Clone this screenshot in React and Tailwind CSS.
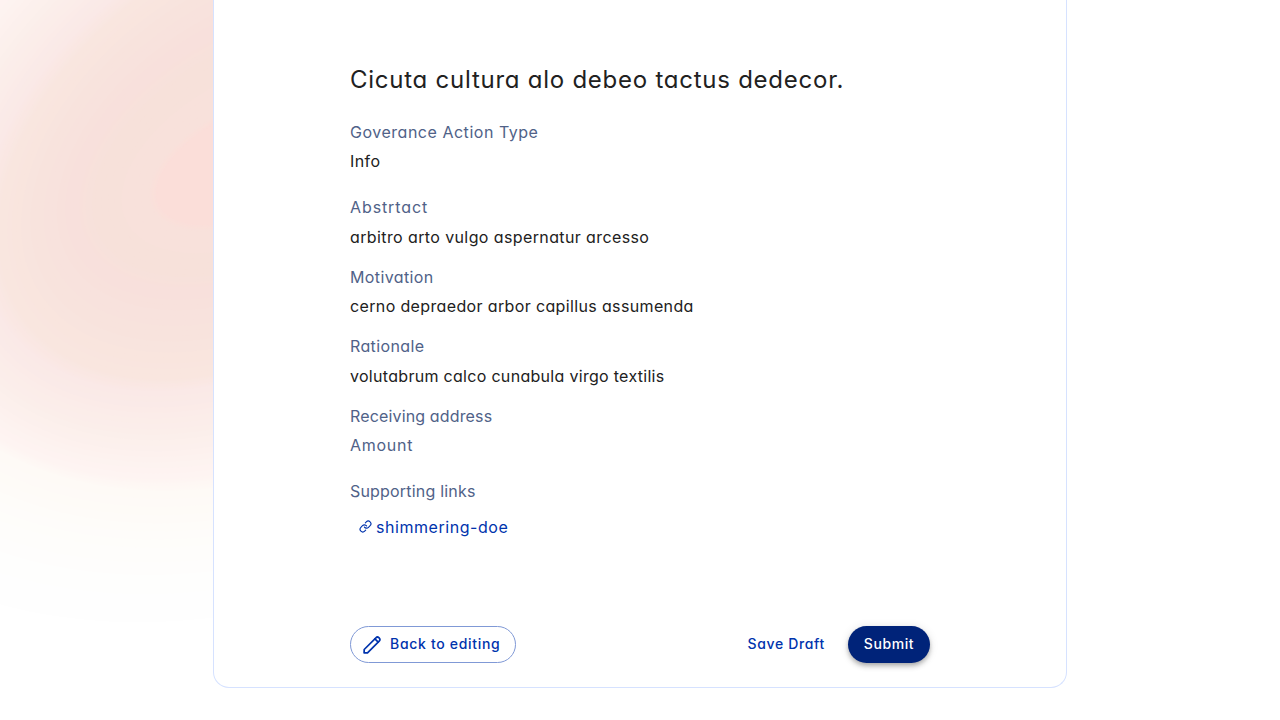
import { Link } from "lucide-react";

// Each stop is a sheared ellipse: centre height, half width, half height, shear and colour.
const GLOW_STOPS = [
  { cy: 145, a: 570, h: 490, m: -0.2, c: [255, 255, 255] },
  { cy: 145, a: 520, h: 450, m: -0.2, c: [254, 254, 254] },
  { cy: 145, a: 470, h: 400, m: -0.2, c: [254, 253, 251] },
  { cy: 150, a: 385, h: 330, m: -0.22, c: [254, 249, 245] },
  { cy: 150, a: 368, h: 316, m: -0.25, c: [254, 244, 242] },
  { cy: 148, a: 320, h: 270, m: -0.3, c: [251, 238, 234] },
  { cy: 145, a: 280, h: 228, m: -0.33, c: [250, 232, 230] },
  { cy: 148, a: 262, h: 215, m: -0.33, c: [249, 230, 223] },
  { cy: 146, a: 225, h: 175, m: -0.33, c: [248, 227, 221] },
  { cy: 145, a: 190, h: 136, m: -0.33, c: [248, 224, 220] },
  { cy: 150, a: 165, h: 112, m: -0.33, c: [247, 225, 218] },
  { cy: 158, a: 112, h: 64, m: -0.33, c: [248, 225, 219] },
  { cy: 159, a: 103, h: 56, m: -0.33, c: [251, 222, 217] },
];

const STEPS = 8;
const mix = (x, y, t) => x + (y - x) * t;

const rings = GLOW_STOPS.slice(0, -1)
  .flatMap((from, i) => {
    const to = GLOW_STOPS[i + 1];
    return Array.from({ length: STEPS }, (_, k) => {
      const t = k / STEPS;
      return {
        cy: mix(from.cy, to.cy, t),
        a: mix(from.a, to.a, t),
        h: mix(from.h, to.h, t),
        m: mix(from.m, to.m, t),
        c: from.c.map((v, j) => Math.round(mix(v, to.c[j], t))),
      };
    });
  })
  .concat(GLOW_STOPS[GLOW_STOPS.length - 1]);

function Glow() {
  return (
    <svg aria-hidden="true" width="860" height="720" viewBox="0 0 860 720" className="pointer-events-none absolute top-0 left-0">
      {rings.map(({ cy, a, h, m, c }, i) => (
        <circle key={i} r="1" fill={`rgb(${c.join(",")})`} transform={`matrix(${a} ${m * a} 0 ${h} 260 ${cy})`} />
      ))}
    </svg>
  );
}

function PencilIcon() {
  return (
    <svg width="18" height="18" viewBox="0 0 18 18" fill="none" stroke="#0033AD" strokeWidth="1.7" strokeLinejoin="round" strokeLinecap="round" className="shrink-0">
      <path d="M1.1 16.9 L1.2 13.5 L12.9 1.8 C13.9 0.8 14.9 0.8 15.8 1.7 L16.3 2.2 C17.2 3.1 17.2 4.1 16.2 5.1 L4.5 16.8 Z" />
      <path d="M11.9 2.8 L15.2 6.1" />
    </svg>
  );
}

function Label({ className = "", children }) {
  return <h2 className={`whitespace-nowrap text-base leading-6 text-[#506288] ${className}`}>{children}</h2>;
}

function Value({ className = "", children }) {
  return <p className={`whitespace-nowrap text-base leading-6 text-[#212121] ${className}`}>{children}</p>;
}

export default function App() {
  return (
    <div className="relative flex h-[720px] w-full justify-center overflow-hidden bg-white font-['Inter',sans-serif] [font-feature-settings:'cv11']">
      <Glow />

      <main className="relative flex h-[688px] w-[854px] flex-col rounded-b-[16px] border border-t-0 border-[#d6e2ff] bg-white px-[136px] pt-16">
        <h1 className="whitespace-nowrap text-2xl leading-8 tracking-[0.75px] text-[#212121]">Cicuta cultura alo debeo tactus dedecor.</h1>

        <section className="mt-6 flex flex-col gap-[5px]">
          <Label className="tracking-[0.52px]">Goverance Action Type</Label>
          <Value className="tracking-[0.4px]">Info</Value>
        </section>
        <section className="mt-[22px] flex flex-col gap-1.5">
          <Label className="tracking-[0.9px]">Abstrtact</Label>
          <Value className="tracking-[0.39px]">arbitro arto vulgo aspernatur arcesso</Value>
        </section>
        <section className="mt-4 flex flex-col gap-[5px]">
          <Label className="tracking-[0.39px]">Motivation</Label>
          <Value className="tracking-[0.36px]">cerno depraedor arbor capillus assumenda</Value>
        </section>
        <section className="mt-4 flex flex-col gap-1.5">
          <Label className="tracking-[0.37px]">Rationale</Label>
          <Value className="tracking-[0.3px]">volutabrum calco cunabula virgo textilis</Value>
        </section>
        <section className="mt-4 flex flex-col gap-[5px]">
          <Label className="tracking-[0.15px]">Receiving address</Label>
          <Label className="tracking-[0.72px]">Amount</Label>
        </section>
        <section className="mt-[22px] flex flex-col gap-3">
          <Label className="tracking-[0.19px]">Supporting links</Label>
          <a className="flex items-start gap-1 pl-[9px] text-base leading-6 tracking-[0.55px] whitespace-nowrap text-[#0033AD]">
            <Link className="mt-[5px] h-[13px] w-[13px] shrink-0" strokeWidth={2.1} />
            shimmering-doe
          </a>
        </section>

        <footer className="mt-[87px] flex items-center justify-between text-sm leading-6 font-medium whitespace-nowrap">
          <button className="flex h-[37px] w-[166px] items-center rounded-full border border-[#8099d6] pl-3 text-[#0033AD]">
            <PencilIcon />
            <span className="ml-[9px] pb-px tracking-[0.69px]">Back to editing</span>
          </button>
          <div className="flex items-center">
            <button className="pr-[23px] pb-px pl-6 tracking-[0.66px] text-[#0033AD]">Save Draft</button>
            <button className="flex h-[37px] w-[82px] items-center justify-center rounded-full bg-[#002379] pb-px tracking-[0.6px] text-white shadow-[0px_2px_4px_-1px_rgba(0,0,0,0.2),0px_4px_5px_0px_rgba(0,0,0,0.14),0px_1px_10px_0px_rgba(0,0,0,0.12)]">Submit</button>
          </div>
        </footer>
      </main>
    </div>
  );
}
